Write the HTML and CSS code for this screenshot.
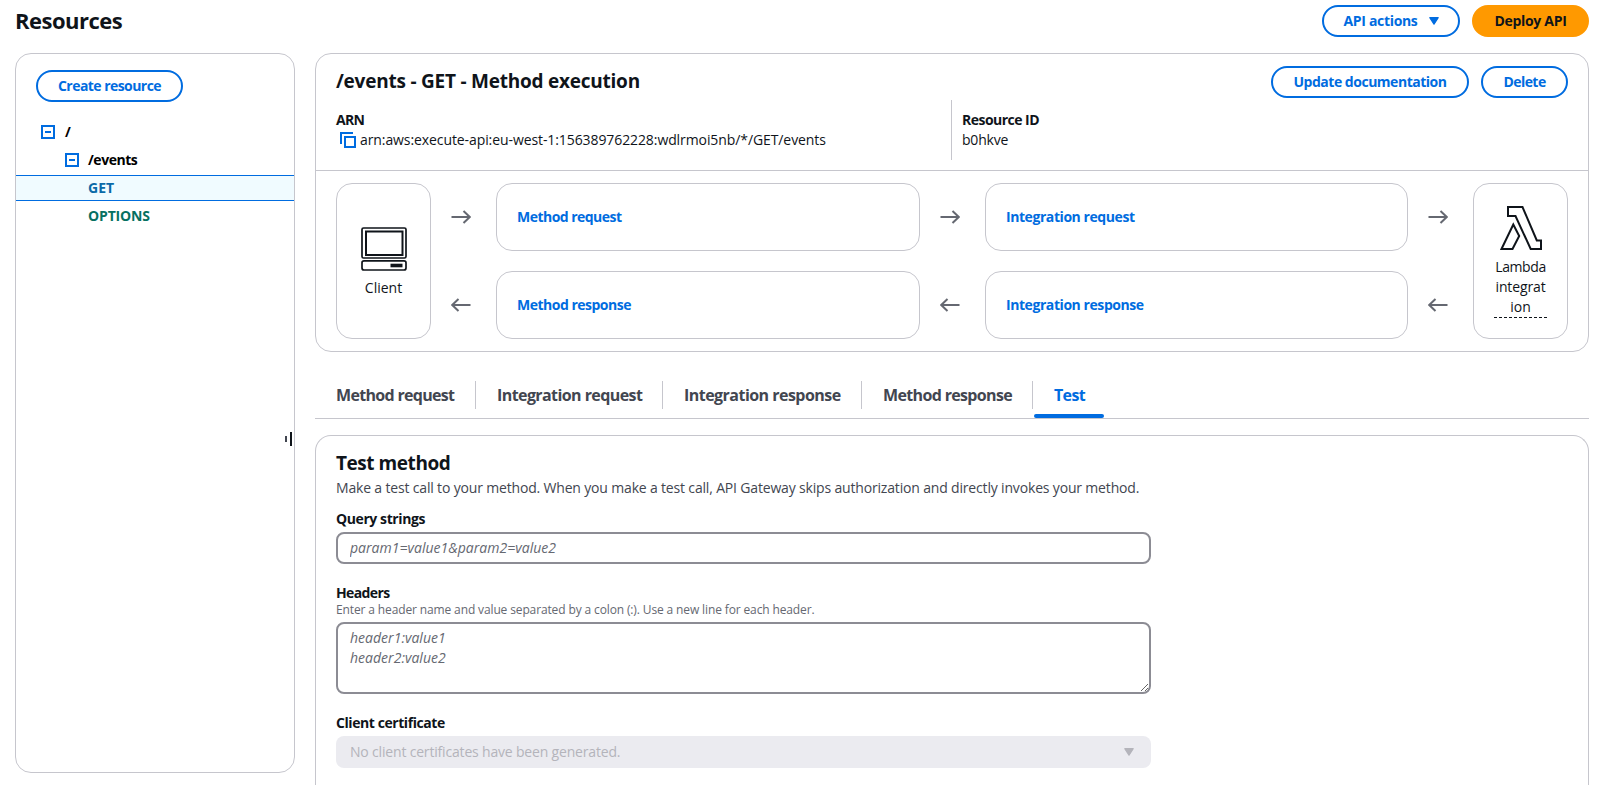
FILE: index.html
```html
<!DOCTYPE html>
<html lang="en">
<head>
<meta charset="utf-8">
<title>Resources</title>
<link rel="stylesheet" href="styles.css">
</head>
<body>
<header class="page-header">
  <h1>Resources</h1>
  <div class="actions">
    <button class="btn btn-api"><span>API actions</span><svg class="caret" width="10" height="8" viewBox="0 0 10 8"><path d="M0.8 0.7h8.4L5 7.2z" fill="currentColor" stroke="currentColor" stroke-width="1.2" stroke-linejoin="round"/></svg></button>
    <button class="btn btn-primary">Deploy API</button>
  </div>
</header>
<div class="layout">
  <aside class="sidebar">
    <button class="btn btn-create">Create resource</button>
    <ul class="tree">
      <li class="row root"><svg class="box" viewBox="0 0 14 14"><path d="M1 1h12v12H1zM4 7h6" /></svg><span>/</span></li>
      <li class="row child"><svg class="box" viewBox="0 0 14 14"><path d="M1 1h12v12H1zM4 7h6" /></svg><span>/events</span></li>
      <li class="row leaf get">GET</li>
      <li class="row leaf options">OPTIONS</li>
    </ul>
    <div class="handle"><i></i><b></b></div>
  </aside>
  <main class="main">
    <section class="card">
      <div class="card-head">
        <h2 class="exec-title">/events - GET - Method execution</h2>
        <div class="actions">
          <button class="btn btn-update">Update documentation</button>
          <button class="btn btn-delete">Delete</button>
        </div>
      </div>
      <dl class="info">
        <div class="pair">
          <dt class="t-arn">ARN</dt>
          <dd class="arn"><svg class="copy" width="16" height="16" viewBox="0 0 16 16"><path d="M1 12V1h12M5 5h10v10H5z"/></svg><span>arn:aws:execute-api:eu-west-1:156389762228:wdlrmoi5nb/*/GET/events</span></dd>
        </div>
        <div class="pair second">
          <dt class="t-resid">Resource ID</dt>
          <dd class="t-id">b0hkve</dd>
        </div>
      </dl>
      <div class="flow">
        <div class="node end client">
          <svg width="46" height="44" viewBox="0 0 46 44" fill="none" stroke="#0f141a"><rect x="1" y="1" width="44" height="30" rx="1.5" stroke-width="1.700"/><rect x="5" y="4.500" width="36.500" height="23.500" stroke-width="2"/><rect x="1" y="33.800" width="44" height="9.200" rx="2" stroke-width="1.700"/><path d="M29.500 38.500h12" stroke-width="3.600"/></svg>
          <span>Client</span>
        </div>
        <svg class="arrow a1" viewBox="0 0 20 14"><path d="M0.5 7h18.5M12.500 1l6.300 6-6.300 6"/></svg>
        <a class="node n1 t-mreq">Method request</a>
        <svg class="arrow a2" viewBox="0 0 20 14"><path d="M0.5 7h18.5M12.500 1l6.300 6-6.300 6"/></svg>
        <a class="node n2 t-ireq">Integration request</a>
        <svg class="arrow a3" viewBox="0 0 20 14"><path d="M0.5 7h18.5M12.500 1l6.300 6-6.300 6"/></svg>
        <svg class="arrow a4" viewBox="0 0 20 14"><path d="M19.500 7H1M7.500 1L1.200 7l6.300 6"/></svg>
        <a class="node n3 t-mres">Method response</a>
        <svg class="arrow a5" viewBox="0 0 20 14"><path d="M19.500 7H1M7.500 1L1.200 7l6.300 6"/></svg>
        <a class="node n4 t-ires">Integration response</a>
        <svg class="arrow a6" viewBox="0 0 20 14"><path d="M19.500 7H1M7.500 1L1.200 7l6.300 6"/></svg>
        <div class="node end lambda">
          <svg width="42" height="44" viewBox="0 0 42 44" fill="none" stroke="#0f141a" stroke-width="2"><path d="M8 1h14.500l14.300 33.500H41V43H30.700L15.500 10H8zM13.300 18.500L1.500 43h11L19.200 30z"/></svg>
          <span class="lambda-text"><span class="t-lambda">Lambda</span><br><span class="t-int">integrat</span><br>ion</span>
        </div>
      </div>
    </section>
    <nav class="tabs">
      <a class="tab w1">Method request</a>
      <a class="tab w2">Integration request</a>
      <a class="tab w3">Integration response</a>
      <a class="tab w4">Method response</a>
      <a class="tab w5 active">Test</a>
    </nav>
    <section class="card test">
      <h2 class="test-title">Test method</h2>
      <p class="desc">Make a test call to your method. When you make a test call, API Gateway skips authorization and directly invokes your method.</p>
      <div class="field">
        <label class="t-query">Query strings</label>
        <input class="input line" placeholder="param1=value1&amp;param2=value2">
      </div>
      <div class="field headers">
        <label class="t-headers">Headers</label>
        <p class="hint">Enter a header name and value separated by a colon (:). Use a new line for each header.</p>
        <textarea class="input area" placeholder="header1:value1&#10;header2:value2"></textarea>
      </div>
      <div class="field cert">
        <label class="t-cert">Client certificate</label>
        <div class="select"><span>No client certificates have been generated.</span><svg class="caret" width="10" height="8" viewBox="0 0 10 8"><path d="M0.8 0.7h8.4L5 7.200z" fill="currentColor" stroke="currentColor" stroke-width="1.2" stroke-linejoin="round"/></svg></div>
      </div>
    </section>
  </main>
</div>
</body>
</html>
```
FILE: styles.css
```css
* { box-sizing: border-box; }
body {
  margin: 0;
  background: #fff;
  color: #0f141a;
  font: 14px/20px "Open Sans", "Noto Sans", sans-serif;
}
h1, h2, p, ul, dl, dd { margin: 0; padding: 0; }

.page-header {
  display: flex;
  justify-content: space-between;
  padding: 5px 15px 0 15px;
  height: 53px;
}
h1 { font-size: 22px; line-height: 30px; font-weight: 700; letter-spacing: -0.5px; }
.actions { display: flex; gap: 12px; }

.btn {
  height: 32px;
  padding: 0;
  border: 2px solid #006ce0;
  border-radius: 16px;
  background: #fff;
  color: #006ce0;
  font: 700 14px/20px "Open Sans", "Noto Sans", sans-serif;
  white-space: nowrap;
}
.btn-api { width: 138px; display: flex; align-items: center; justify-content: center; gap: 11px; letter-spacing: -0.32px; }
.btn-primary { width: 117px; background: #f90; border-color: #f90; color: #0f141a; letter-spacing: -0.31px; }
.btn-create { width: 147px; margin-left: 20px; letter-spacing: -0.55px; }
.btn-update { width: 198px; letter-spacing: -0.48px; }
.btn-delete { width: 87px; letter-spacing: -0.55px; }

.layout { display: flex; gap: 20px; align-items: flex-start; padding: 0 15px; height: 732px; }
.sidebar {
  position: relative;
  flex: none;
  width: 280px;
  height: 720px;
  padding-top: 16px;
  border: 1px solid #c6c6cd;
  border-radius: 16px;
}
.tree { list-style: none; margin-top: 16px; font-weight: 700; }
.row { display: flex; align-items: center; height: 28px; color: #000; }
.root { padding-left: 25px; gap: 10px; }
.child { padding-left: 49px; gap: 9px; letter-spacing: -0.45px; }
.leaf { padding-left: 72px; }
.box { width: 14px; height: 14px; fill: none; stroke: #006ce0; stroke-width: 2; }
.get { height: 26px; margin-top: 1px; background: #f0fbff; border: solid #006ce0; border-width: 1px 0; color: #0a6aa8; }
.options { margin-top: 1px; color: #067061; letter-spacing: -0.15px; }
.handle { position: absolute; right: 2px; top: 378px; display: flex; align-items: center; gap: 3px; }
.handle i { width: 2px; height: 6px; background: #424650; }
.handle b { width: 2px; height: 14px; background: #0f141a; }

.main { flex: 1; min-width: 0; height: 100%; display: flex; flex-direction: column; }
.card { border: 1px solid #c6c6cd; border-radius: 16px; }
.card-head { display: flex; justify-content: space-between; padding: 12px 20px 0; height: 46px; }
.exec-title { font-size: 19px; line-height: 30px; font-weight: 700; letter-spacing: -0.23px; }
.info { display: flex; height: 71px; padding: 0 20px; border-bottom: 1px solid #c6c6cd; }
.pair { width: 615px; height: 60px; padding-top: 10px; }
.second { border-left: 1px solid #c6c6cd; padding-left: 10px; }
dt { font-weight: 700; }
.arn { display: flex; align-items: center; gap: 4px; padding-left: 4px; letter-spacing: -0.09px; }
.copy { fill: none; stroke: #006ce0; stroke-width: 2; }
.t-arn { letter-spacing: -0.7px; }
.t-resid { letter-spacing: -0.53px; }
.t-id { letter-spacing: -0.2px; }

.flow {
  display: grid;
  grid-template-columns: 95px 65px 424px 65px 423px 65px 95px;
  grid-template-rows: 68px 68px;
  row-gap: 20px;
  padding: 12px 20px;
  grid-template-areas: "client a1 n1 a2 n2 a3 lambda" "client a4 n3 a5 n4 a6 lambda";
}
.node { border: 1px solid #c6c6cd; border-radius: 16px; }
a.node { display: flex; align-items: center; padding-left: 20px; color: #006ce0; font-weight: 700; }
.end { display: flex; flex-direction: column; align-items: center; text-align: center; }
.client { grid-area: client; padding-top: 43px; }
.client span { margin-top: 7px; }
.lambda { grid-area: lambda; padding-top: 22px; }
.lambda-text { width: 53px; margin-top: 7px; border-bottom: 1px dashed #0f141a; }
.arrow { width: 20px; height: 14px; margin-left: 20px; align-self: center; fill: none; stroke: #656871; stroke-width: 2; }
.a1 { grid-area: a1; } .a2 { grid-area: a2; } .a3 { grid-area: a3; }
.a4 { grid-area: a4; } .a5 { grid-area: a5; } .a6 { grid-area: a6; }
.n1 { grid-area: n1; } .n2 { grid-area: n2; } .n3 { grid-area: n3; } .n4 { grid-area: n4; }
.t-mreq { letter-spacing: -0.53px; }
.t-mres { letter-spacing: -0.5px; }
.t-ireq { letter-spacing: -0.43px; }
.t-ires { letter-spacing: -0.43px; }
.t-lambda { letter-spacing: -0.4px; }
.t-int { letter-spacing: -0.13px; }

.tabs { flex: none; display: flex; height: 67px; padding-top: 29px; border-bottom: 1px solid #c6c6cd; }
.tab {
  position: relative;
  height: 28px;
  padding-left: 21px;
  border-right: 1px solid #c6c6cd;
  color: #424650;
  font-size: 16px;
  line-height: 29px;
  font-weight: 700;
  white-space: nowrap;
}
.w1 { width: 161px; letter-spacing: -0.68px; }
.w2 { width: 187px; letter-spacing: -0.58px; }
.w3 { width: 199px; letter-spacing: -0.53px; }
.w4 { width: 171px; letter-spacing: -0.65px; }
.w5 { width: 72px; letter-spacing: -0.65px; border-right: 0; }
.active { color: #006ce0; }
.active::after {
  content: "";
  position: absolute;
  left: 1px;
  top: 33px;
  width: 70px;
  height: 4px;
  border-radius: 2px;
  background: #006ce0;
}

.test { flex: 1; margin-top: 16px; padding: 15px 20px 0; border-bottom: 0; border-radius: 16px 16px 0 0; }
.test-title { font-size: 19px; line-height: 24px; font-weight: 700; letter-spacing: -0.45px; }
.desc { margin-top: 3px; color: #424650; letter-spacing: -0.17px; }
.field { width: 815px; }
.desc + .field { margin-top: 11px; }
.headers { margin-top: 19px; }
.cert { margin-top: 19px; }
label { display: block; font-weight: 700; }
.t-query { letter-spacing: -0.41px; }
.t-headers { letter-spacing: -0.62px; }
.t-cert { letter-spacing: -0.43px; }
.hint { color: #656871; font-size: 12px; line-height: 14px; letter-spacing: -0.13px; }
.input {
  display: block;
  width: 815px;
  height: 32px;
  margin-top: 3px;
  padding: 4px 12px;
  border: 2px solid #8c8c94;
  border-radius: 8px;
  background: #fff;
  font: 14px/20px "Open Sans", "Noto Sans", sans-serif;
}
.input::placeholder { color: #656871; opacity: 1; font-style: italic; letter-spacing: 0.02px; }
.line { padding: 3px 12px 5px; }
.area { height: 72px; margin-top: 5px; }
.select {
  display: flex;
  align-items: center;
  justify-content: space-between;
  height: 32px;
  margin-top: 3px;
  padding: 0 17px 0 14px;
  border-radius: 8px;
  background: #ebebf0;
  color: #b4b4bb;
  letter-spacing: -0.18px;
}
```
